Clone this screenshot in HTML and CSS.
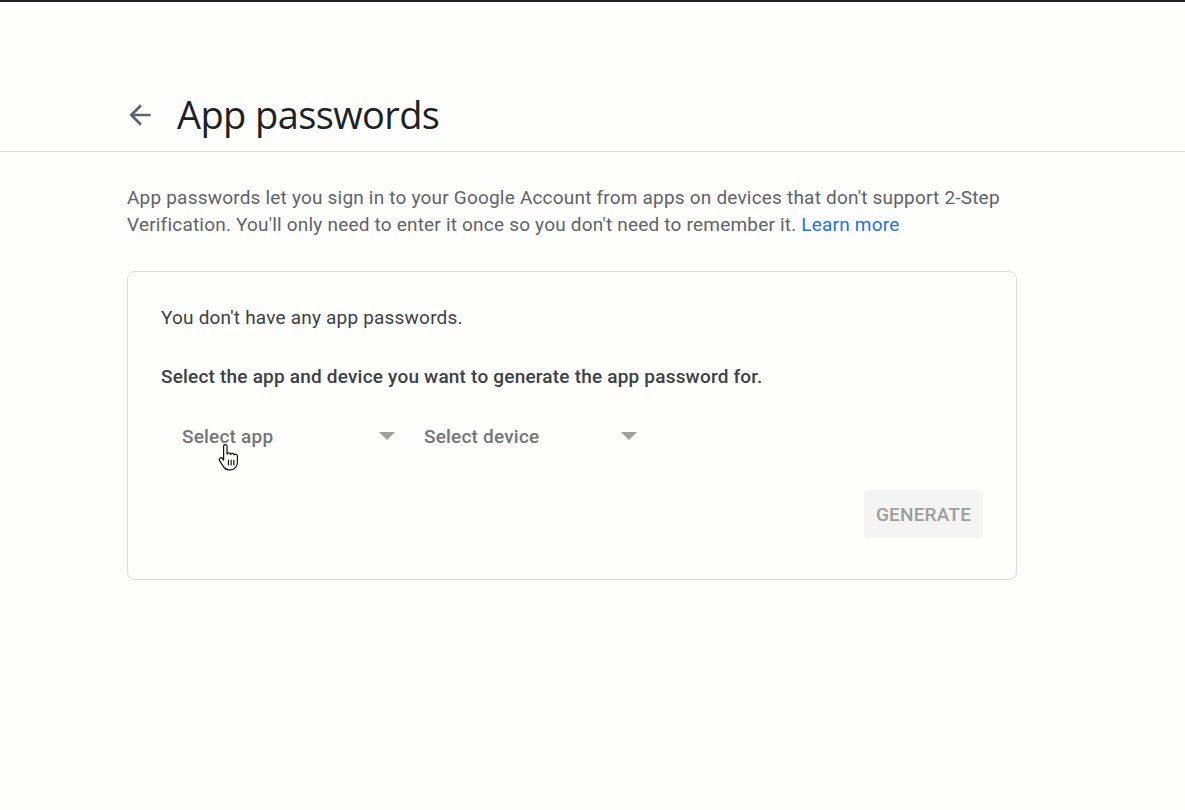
FILE: index.html
```html
<!DOCTYPE html>
<html>
<head>
<meta charset="utf-8">
<link rel="stylesheet" href="styles.css">
</head>
<body>
<div class="topline"></div>
<header class="header">
  <svg class="back" width="32" height="32" viewBox="0 0 24 24"><path d="M20 11H7.83l5.59-5.59L12 4l-8 8 8 8 1.41-1.41L7.83 13H20v-2z" fill="#5f6368"/></svg>
  <h1 class="title">App passwords</h1>
</header>
<main class="main">
  <p class="intro">App passwords let you sign in to your Google Account from apps on devices that don't support 2-Step Verification. You'll only need to enter it once so you don't need to remember it. <a class="link" href="#">Learn more</a></p>
  <section class="card">
    <p class="none">You don't have any app passwords.</p>
    <p class="instr">Select the app and device you want to generate the app password for.</p>
    <div class="selects">
      <div class="select">
        <span class="label">Select app</span>
        <span class="caret"></span>
        <svg class="cursor" width="24" height="28" viewBox="0 0 22 26">
          <path d="M6 2.2c0-1 .7-1.7 1.6-1.7s1.6.7 1.6 1.7v7.3c.3-.8 1-1.2 1.7-1.2.9 0 1.5.6 1.6 1.4.3-.6.9-1 1.6-1 .9 0 1.5.6 1.6 1.5.3-.5.8-.8 1.4-.8 1 0 1.7.8 1.7 1.8v5.6c0 4-2.6 7.2-6.4 7.2h-1.6c-2.3 0-3.8-1.1-5-3l-3.5-5.6c-.5-.8-.3-1.8.4-2.3.7-.5 1.7-.3 2.3.4L6 14.9V2.2z" fill="#fff" stroke="#111" stroke-width="1.1" stroke-linejoin="round"/>
          <path d="M10.5 15v4.5M13 15v4.5M15.5 15v4.5" stroke="#111" stroke-width="1.1" stroke-linecap="round"/>
        </svg>
      </div>
      <div class="select">
        <span class="label">Select device</span>
        <span class="caret"></span>
      </div>
    </div>
    <div class="actions">
      <button class="generate" type="button">Generate</button>
    </div>
  </section>
</main>
</body>
</html>
```
FILE: styles.css
```css
html, body {
  margin: 0;
  padding: 0;
  background: #fefefd;
  font-family: Roboto, "Liberation Sans", Arial, sans-serif;
}
.topline {
  height: 2px;
  background: #202124;
}
.header {
  display: flex;
  align-items: center;
  height: 150px;
  box-sizing: border-box;
  padding: 75px 0 0 127px;
  border-bottom: 1px solid #dadce0;
}
.back {
  width: 32px;
  height: 32px;
  margin-left: -3px;
  margin-right: 21px;
  margin-top: 2px;
}
.title {
  margin: 0;
  font-family: "Open Sans", Roboto, sans-serif;
  font-weight: 400;
  font-size: 38px;
  color: #202124;
  letter-spacing: -0.6px;
}
.main {
  padding: 32px 0 0 127px;
  width: 890px;
}
.intro {
  margin: 0;
  font-size: 19px;
  line-height: 27px;
  color: #5f6368;
  letter-spacing: 0.2px;
}
.link {
  color: #1a73e8;
  text-decoration: none;
}
.card {
  margin-top: 33px;
  border: 1px solid #dadce0;
  border-radius: 8px;
  padding: 33px 33px 40px 33px;
  height: 309px;
  box-sizing: border-box;
}
.none {
  margin: 0;
  font-size: 19px;
  line-height: 26px;
  color: #3c4043;
  letter-spacing: 0.2px;
}
.instr {
  margin: 33px 0 0 0;
  font-size: 19px;
  line-height: 26px;
  font-weight: 500;
  color: #3c4043;
  letter-spacing: 0.2px;
}
.selects {
  display: flex;
  gap: 12px;
  margin-top: 28px;
  padding-left: 9px;
}
.select {
  position: relative;
  display: flex;
  align-items: center;
  justify-content: space-between;
  width: 230px;
  height: 36px;
  box-sizing: border-box;
  padding: 0 5px 0 12px;
}
.label {
  font-size: 19px;
  font-weight: 500;
  color: #757575;
  letter-spacing: 0.2px;
}
.caret {
  width: 0;
  height: 0;
  border-left: 8px solid transparent;
  border-right: 8px solid transparent;
  border-top: 8px solid #9e9e9e;
}
.cursor {
  position: absolute;
  left: 47px;
  top: 26px;
}
.actions {
  display: flex;
  justify-content: flex-end;
  margin-top: 36px;
}
.generate {
  height: 48px;
  width: 119px;
  border: none;
  border-radius: 4px;
  background: #f4f4f4;
  color: #9e9e9e;
  font-family: Roboto, sans-serif;
  font-weight: 500;
  font-size: 19px;
  text-transform: uppercase;
  letter-spacing: 0.2px;
  padding: 0;
}
```
